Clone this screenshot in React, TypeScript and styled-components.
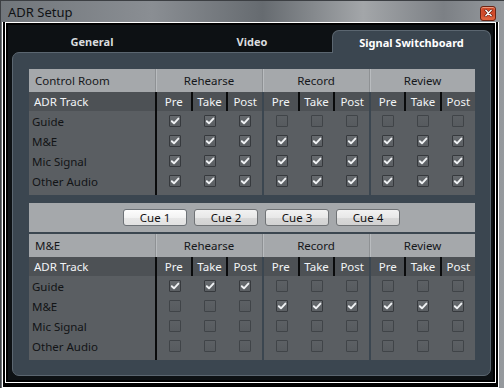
import React from 'react';
import styled, { createGlobalStyle } from 'styled-components';

const GlobalStyle = createGlobalStyle`
  html, body {
    margin: 0;
    padding: 0;
    background: #6f7479;
    overflow: hidden;
  }
  * {
    box-sizing: border-box;
  }
`;

const Window = styled.div`
  width: 504px;
  height: 388px;
  display: flex;
  flex-direction: column;
  font-family: 'Noto Sans', 'Liberation Sans', sans-serif;
  background: linear-gradient(90deg, #71767b 0%, #8a8e93 30%, #666b70 52%, #a3a6a9 72%, #7c8085 88%, #969a9e 100%);
  border-left: 1px solid #3c3f43;
  border-top: 1px solid #3c3f43;
`;

const TitleBar = styled.div`
  height: 21px;
  display: flex;
  align-items: center;
  justify-content: space-between;
  padding: 0 8px 0 7px;
`;

const Title = styled.span`
  font-size: 13px;
  color: #101214;
  margin-top: 1px;
`;

const CloseButton = styled.div`
  width: 16px;
  height: 15px;
  margin-top: 3px;
  display: flex;
  align-items: center;
  justify-content: center;
  border: 1px solid #6b2414;
  border-radius: 3px;
  background: #cf4a2a;
  box-shadow: inset 0 1px 0 #ee9a7e, inset 0 -3px 2px #e0643e;
`;

const Frame = styled.div`
  flex: 1;
  display: flex;
  margin: 0 5px 0 1px;
  padding: 0 2px 4px 2px;
  border: 1px solid #fff;
  border-top: 0;
  background: #000;
`;

const Inner = styled.div`
  flex: 1;
  display: flex;
  border: 1px solid #fff;
`;

const Content = styled.div`
  flex: 1;
  display: flex;
  flex-direction: column;
  border: 2px solid #000;
  background: #0d1114;
  padding: 0 2px 4px 4px;
`;

const TabBar = styled.div`
  height: 27px;
  display: flex;
  align-items: flex-end;
`;

const Tab = styled.div<{ $active?: boolean }>`
  width: 160px;
  height: 22px;
  display: flex;
  align-items: center;
  justify-content: center;
  font-size: 11px;
  font-weight: bold;
  color: ${({ $active }) => ($active ? '#ffffff' : '#d9dcdf')};
  ${({ $active }) =>
    $active &&
    `
    position: relative;
    z-index: 1;
    width: 159px;
    margin-bottom: -1px;
    height: 23px;
    background: #3b4650;
    border: 1px solid #5b6670;
    border-bottom: 0;
    border-radius: 7px 7px 0 0;
  `}
`;

const Panel = styled.div`
  flex: 1;
  display: flex;
  flex-direction: column;
  background: #3b4650;
  border: 1px solid #5b6670;
  border-radius: 7px 0 7px 7px;
  padding: 16px 15px 14px 16px;
`;

const Table = styled.div`
  width: 446px;
  display: flex;
  flex-direction: column;
`;

const Row = styled.div<{ $h: number; $bg: string }>`
  display: grid;
  grid-template-columns: 126px 107px 107px 106px;
  height: ${({ $h }) => $h}px;
  background: ${({ $bg }) => $bg};
`;

const HeadLabel = styled.div`
  display: flex;
  align-items: center;
  padding-left: 6px;
  font-size: 11.5px;
  color: #15171a;
`;

const HeadGroup = styled.div`
  display: flex;
  align-items: center;
  justify-content: center;
  font-size: 11.5px;
  color: #15171a;
  border-left: 1px solid #8e9194;
  box-shadow: inset 1px 0 0 #b9bcbf;
`;

const SubLabel = styled.div`
  display: flex;
  align-items: center;
  padding-left: 5px;
  font-size: 11.5px;
  color: #f2f4f6;
`;

const RowLabel = styled.div`
  display: flex;
  align-items: center;
  padding-left: 3px;
  font-size: 11.5px;
  color: #121416;
`;

const Group = styled.div<{ $first?: boolean }>`
  display: flex;
  border-left: 2px solid ${({ $first }) => ($first ? '#0a0b0c' : '#3b4650')};
`;

const SubCell = styled.div<{ $sep?: boolean }>`
  flex: 1;
  display: flex;
  align-items: center;
  justify-content: center;
  font-size: 11.5px;
  color: #f2f4f6;
  border-left: ${({ $sep }) => ($sep ? '2px solid #0a0b0c' : '0')};
`;

const Box = styled.div<{ $checked: boolean }>`
  width: 12px;
  height: 12px;
  display: flex;
  align-items: center;
  justify-content: center;
  border: 1px solid ${({ $checked }) => ($checked ? '#36393d' : '#404448')};
  border-radius: 1px;
  background: ${({ $checked }) =>
    $checked ? 'linear-gradient(#676b6f, #5b5f63)' : 'linear-gradient(#5c6064, #575b5f)'};
`;

const Gap = styled.div<{ $h: number }>`
  height: ${({ $h }) => $h}px;
`;

const CueBar = styled.div`
  width: 446px;
  height: 29px;
  display: flex;
  align-items: center;
  gap: 7px;
  padding-left: 94px;
  background: #a5a8ab;
`;

const CueButton = styled.div<{ $active?: boolean }>`
  width: 64px;
  height: 17px;
  display: flex;
  align-items: center;
  justify-content: center;
  font-size: 11.5px;
  color: #111;
  border: 1px solid ${({ $active }) => ($active ? '#6d7277' : '#707376')};
  border-radius: 3px;
  background: ${({ $active }) =>
    $active
      ? 'linear-gradient(#fdfdfd 0%, #f3f3f3 50%, #e8e8e8 51%, #e2e2e2 100%)'
      : 'linear-gradient(#f2f2f2 0%, #e8e8e8 50%, #d9d9d9 51%, #d2d2d2 100%)'};
`;

const groups = ['Rehearse', 'Record', 'Review'];
const subs = ['Pre', 'Take', 'Post'];
const tracks = ['Guide', 'M&E', 'Mic Signal', 'Other Audio'];

const controlRoom = [
  [true, false, false],
  [true, true, true],
  [true, true, true],
  [true, true, true],
];

const mixEffects = [
  [true, false, false],
  [false, true, true],
  [false, false, false],
  [false, false, false],
];

const Check = ({ checked }: { checked: boolean }) => (
  <Box $checked={checked}>
    {checked && (
      <svg width="10" height="10" viewBox="0 0 10 10">
        <path d="M1.8 5.2 L4 7.3 L8.4 2.6" fill="none" stroke="#f0f2f4" strokeWidth="1.9" strokeLinecap="round" strokeLinejoin="round" />
      </svg>
    )}
  </Box>
);

const Switchboard = ({ title, data }: { title: string; data: boolean[][] }) => (
  <Table>
    <Row $h={23} $bg="#a5a8ab">
      <HeadLabel>{title}</HeadLabel>
      {groups.map((g) => (
        <HeadGroup key={g}>{g}</HeadGroup>
      ))}
    </Row>
    <Row $h={19} $bg="#4d5155">
      <SubLabel>ADR Track</SubLabel>
      {groups.map((g, gi) => (
        <Group key={g} $first={gi === 0}>
          {subs.map((s, si) => (
            <SubCell key={s} $sep={si > 0}>{s}</SubCell>
          ))}
        </Group>
      ))}
    </Row>
    {tracks.map((t, ti) => (
      <Row key={t} $h={20} $bg="#5a5e62">
        <RowLabel>{t}</RowLabel>
        {groups.map((g, gi) => (
          <Group key={g} $first={gi === 0}>
            {subs.map((s) => (
              <SubCell key={s}>
                <Check checked={data[ti][gi]} />
              </SubCell>
            ))}
          </Group>
        ))}
      </Row>
    ))}
    <Row $h={4} $bg="#5a5e62">
      <div />
      {groups.map((g, gi) => (
        <Group key={g} $first={gi === 0} />
      ))}
    </Row>
  </Table>
);

const App = () => {
  return (
    <>
      <GlobalStyle />
      <Window>
        <TitleBar>
          <Title>ADR Setup</Title>
          <CloseButton>
            <svg width="9" height="8" viewBox="0 0 9 8">
              <path d="M1.8 1.3 L7.2 6.7 M7.2 1.3 L1.8 6.7" stroke="#5a1a0c" strokeWidth="2.6" strokeLinecap="round" />
              <path d="M1.8 1.3 L7.2 6.7 M7.2 1.3 L1.8 6.7" stroke="#ffffff" strokeWidth="1.4" strokeLinecap="round" />
            </svg>
          </CloseButton>
        </TitleBar>
        <Frame>
          <Inner>
            <Content>
              <TabBar>
                <Tab>General</Tab>
                <Tab>Video</Tab>
                <Tab $active>Signal Switchboard</Tab>
              </TabBar>
              <Panel>
                <Switchboard title="Control Room" data={controlRoom} />
                <Gap $h={8} />
                <CueBar>
                  <CueButton $active>Cue 1</CueButton>
                  <CueButton>Cue 2</CueButton>
                  <CueButton>Cue 3</CueButton>
                  <CueButton>Cue 4</CueButton>
                </CueBar>
                <Gap $h={2} />
                <Switchboard title="M&E" data={mixEffects} />
              </Panel>
            </Content>
          </Inner>
        </Frame>
      </Window>
    </>
  );
};

export default App;
